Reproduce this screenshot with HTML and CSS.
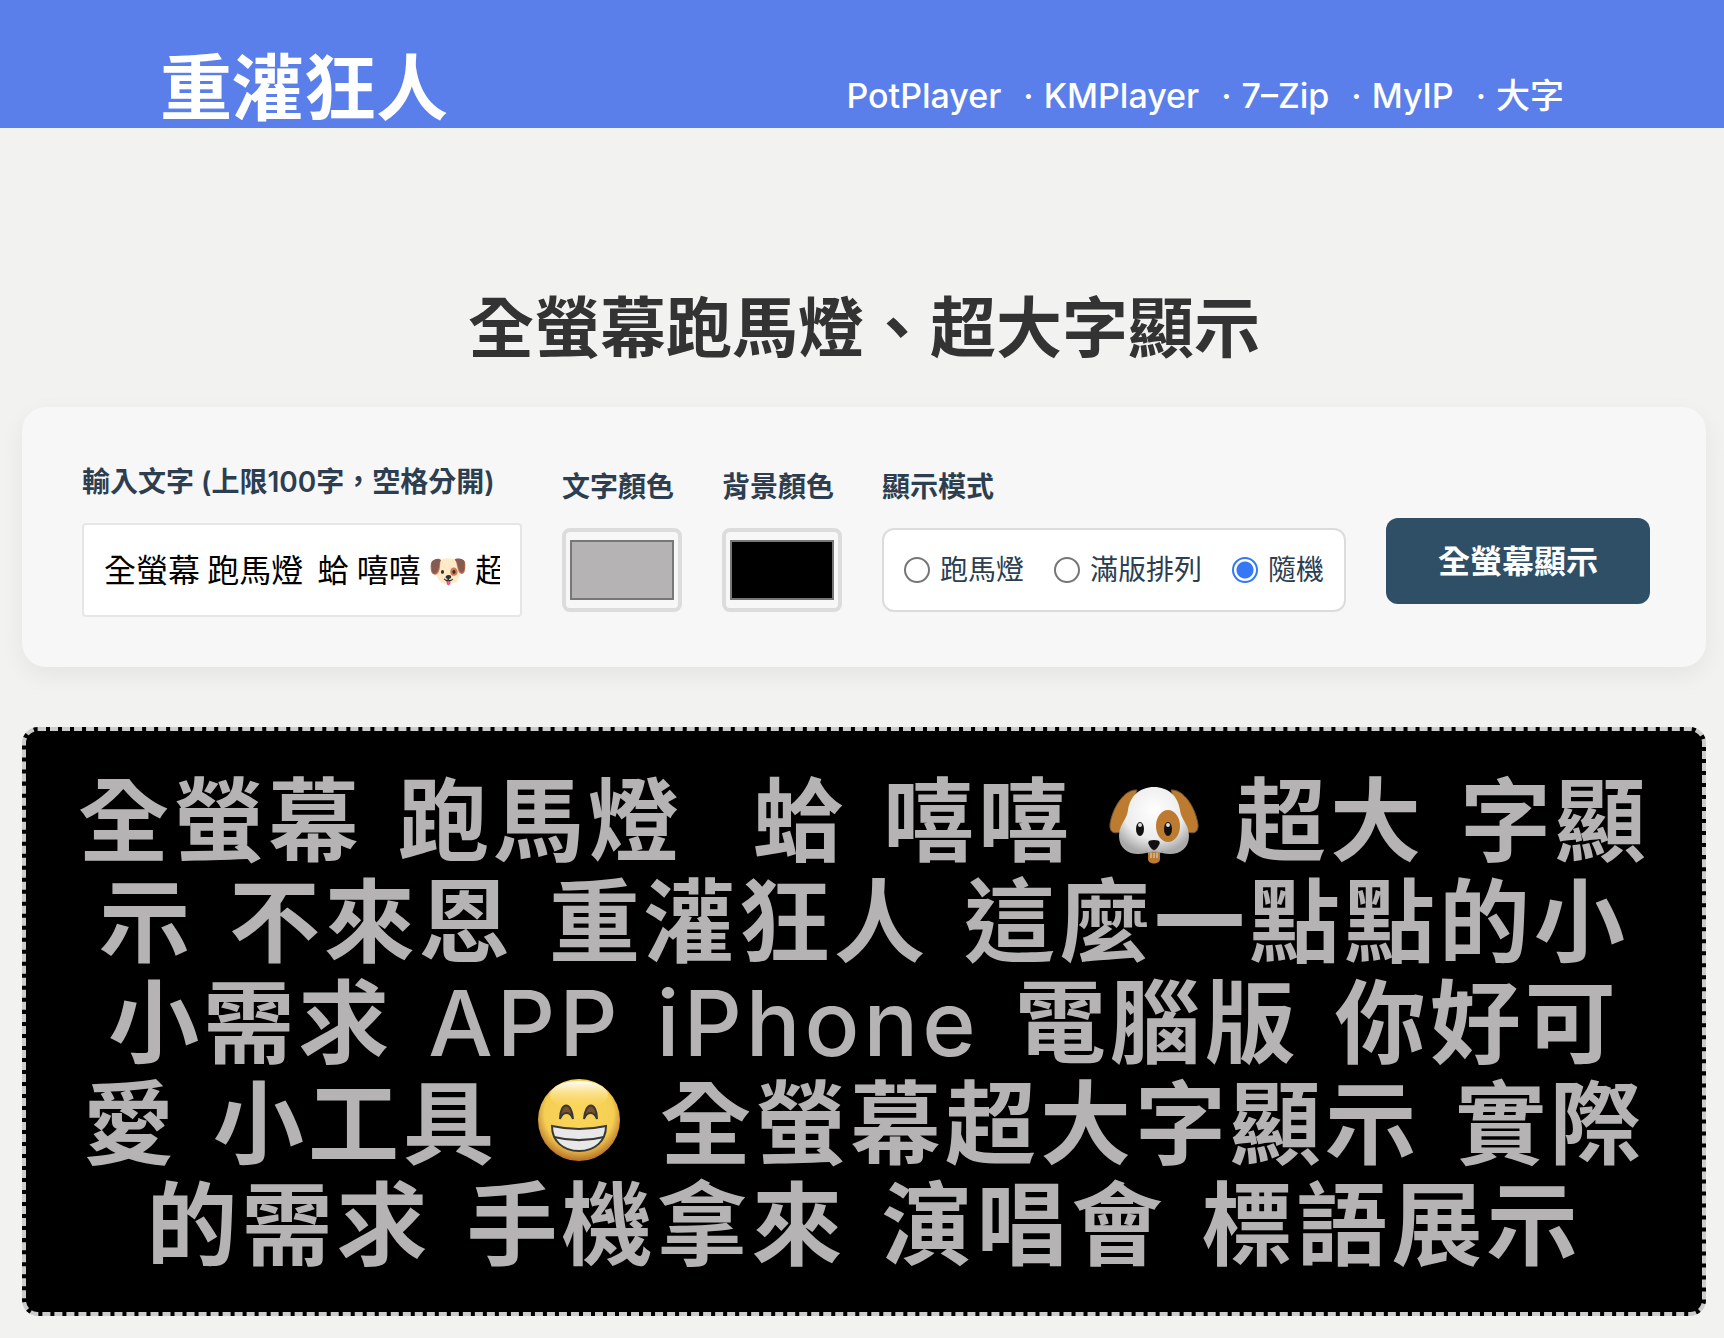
FILE: index.html
```html
<!DOCTYPE html>
<html lang="zh-Hant">
<head>
<meta charset="utf-8">
<meta name="viewport" content="width=device-width, initial-scale=1">
<title>全螢幕跑馬燈、超大字顯示</title>
<link rel="stylesheet" href="styles.css">
</head>
<body>
<svg class="defs" aria-hidden="true">
  <defs>
    <radialGradient id="fur" cx="50%" cy="35%" r="65%">
      <stop offset="0" stop-color="#ffffff"/>
      <stop offset="0.65" stop-color="#ececec"/>
      <stop offset="1" stop-color="#a9a9a9"/>
    </radialGradient>
    <radialGradient id="skin" cx="50%" cy="42%" r="56%">
      <stop offset="0" stop-color="#fbd65a"/>
      <stop offset="0.75" stop-color="#f5cf52"/>
      <stop offset="1" stop-color="#bd7a2c"/>
    </radialGradient>
    <linearGradient id="shine" x1="0" y1="0" x2="0" y2="1">
      <stop offset="0" stop-color="#ffffff"/>
      <stop offset="1" stop-color="#fbd65a" stop-opacity="0"/>
    </linearGradient>
    <symbol id="dog" viewBox="0 -5 92 92">
      <path d="M29 9C17 8 5 25 2 43c-1 9 5 10 10 8 6-3 9-10 10-18z" fill="#bd7b30" stroke="#6e5638"/>
      <path d="M63 9c12-1 24 16 27 34 1 9-5 10-10 8-6-3-9-10-10-18z" fill="#bd7b30" stroke="#6e5638"/>
      <path d="M46 6c14 0 24 9 26 23 1 10 9 14 9 26 0 12-9 18-19 18-6 0-10-2-16-2s-10 2-16 2c-10 0-19-6-19-18 0-12 8-16 9-26C22 15 32 6 46 6z" fill="url(#fur)"/>
      <ellipse cx="60" cy="45" rx="12" ry="16" fill="#bd7b30"/>
      <path d="M40 71h12v7c0 6-12 6-12 0z" fill="#bd7b30"/>
      <path d="M43 72v5M46 72v5M49 72v5" stroke="#dedede"/>
      <path d="M46 62v8m-9 0c3 3 7 2 9-1 2 3 6 4 9 1" fill="none" stroke="#999" stroke-width="1"/>
      <ellipse cx="32" cy="48" rx="4" ry="7" fill="#111"/>
      <ellipse cx="60" cy="48" rx="4" ry="7" fill="#111"/>
      <circle cx="32" cy="44" r="2" fill="#ddd"/>
      <circle cx="60" cy="44" r="2" fill="#ddd"/>
      <path d="M46 59c7 0 6 3 5 5s-3 5-5 5-4-3-5-5-2-5 5-5z" fill="#111"/>
    </symbol>
    <symbol id="grin" viewBox="0 5 92 92">
      <circle cx="46" cy="46" r="41" fill="url(#skin)"/>
      <ellipse cx="46" cy="21" rx="29" ry="14" fill="url(#shine)"/>
      <path d="M27 45c0-18 12-18 13 0-3-8-10-8-13 0zM51 45c1-18 13-18 13 0-3-8-10-8-13 0z" fill="#7c5029" stroke="#383838" stroke-width="2"/>
      <path d="M19 52c18 4 36 4 54 0 0 15-11 25-27 25S19 67 19 52z" fill="#e8e8e8" stroke="#383838" stroke-width="2"/>
      <path d="M21 63c16 4 34 4 50 0" fill="none" stroke="#383838" stroke-width="2"/>
    </symbol>
  </defs>
</svg>

<header class="site-header">
  <a class="brand" href="#">重灌狂人</a>
  <nav class="site-nav">
    <a href="#">PotPlayer</a>
    <span>·</span>
    <a href="#">KMPlayer</a>
    <span>·</span>
    <a href="#">7–Zip</a>
    <span>·</span>
    <a href="#">MyIP</a>
    <span>·</span>
    <a href="#">大字</a>
  </nav>
</header>

<main class="page">
  <h1 class="page-title">全螢幕跑馬燈、超大字顯示</h1>

  <form class="controls">
    <div class="field field-text">
      <label for="message">輸入文字 (上限100字，空格分開)</label>
      <input class="text-input" id="message" type="text" value="全螢幕 跑馬燈  蛤 嘻嘻 🐶 超大 字顯示 不來恩 重灌狂人">
    </div>
    <div class="field">
      <label for="text-color">文字顏色</label>
      <input class="color-input" id="text-color" type="color" value="#b5b3b4">
    </div>
    <div class="field">
      <label for="back-color">背景顏色</label>
      <input class="color-input" id="back-color" type="color" value="#000000">
    </div>
    <div class="field" role="radiogroup" aria-labelledby="mode-label">
      <span class="field-label" id="mode-label">顯示模式</span>
      <div class="modes">
        <label class="mode"><input type="radio" name="mode">跑馬燈</label>
        <label class="mode"><input type="radio" name="mode">滿版排列</label>
        <label class="mode"><input type="radio" name="mode" checked>隨機</label>
      </div>
    </div>
    <button class="show-button" type="button">全螢幕顯示</button>
  </form>

  <section class="preview">
    <p class="line"><span>全螢幕</span> <span>跑馬燈</span> <span class="spaced">蛤</span> <span>嘻嘻</span> <svg class="emoji" role="img" aria-label="🐶"><use href="#dog"/></svg> <span>超大</span> <span>字顯</span></p>
    <p class="line"><span>示</span> <span>不來恩</span> <span>重灌狂人</span> <span>這麼一點點的小</span></p>
    <p class="line"><span>小需求</span> <span class="latin">APP</span> <span class="latin">iPhone</span> <span>電腦版</span> <span>你好可</span></p>
    <p class="line"><span>愛</span> <span>小工具</span> <svg class="emoji" role="img" aria-label="😁"><use href="#grin"/></svg> <span>全螢幕超大字顯示</span> <span>實際</span></p>
    <p class="line"><span>的需求</span> <span>手機拿來</span> <span>演唱會</span> <span>標語展示</span></p>
  </section>
</main>
</body>
</html>
```
FILE: styles.css
```css
* {
  box-sizing: border-box;
}

body {
  margin: 0;
  background: #f2f2f0;
  color: #333;
  font-family: Inter, "Noto Sans CJK TC", sans-serif;
}

.defs {
  position: absolute;
  width: 0;
  height: 0;
}

.site-header {
  display: flex;
  justify-content: space-between;
  align-items: flex-end;
  height: 128px;
  padding: 0 160px;
  background: #5a7fea;
}

.brand {
  color: #fff;
  font-size: 72px;
  font-weight: 700;
  line-height: 80px;
  text-decoration: none;
}

.site-nav {
  display: flex;
  gap: 10px;
  color: #fff;
  font-size: 34px;
  font-weight: 500;
  line-height: 64px;
}

.site-nav a {
  color: #fff;
  text-decoration: none;
}

.site-nav span {
  padding-left: 12px;
}

.page {
  padding: 150px 18px 21px 22px;
}

.page-title {
  margin: 0;
  font-size: 66px;
  font-weight: 700;
  line-height: 100px;
  text-align: center;
}

.controls {
  display: flex;
  align-items: center;
  gap: 40px;
  margin-top: 29px;
  padding: 50px 56px 50px 60px;
  border-radius: 24px;
  background: #f7f7f7;
  box-shadow: 0 8px 24px rgba(0, 0, 0, 0.06);
  color: #2c3e50;
  font-size: 28px;
}

.field {
  display: flex;
  flex-direction: column;
  gap: 16px;
  font-weight: 600;
  line-height: 50px;
  white-space: nowrap;
}

.field-text {
  flex: 1;
}

.text-input {
  width: 100%;
  height: 94px;
  padding: 0 20px 4px;
  border: 2px solid #e6e6e6;
  border-radius: 4px;
  background: #fff;
  color: #000;
  font-family: "Noto Sans CJK TC", sans-serif;
  font-size: 32px;
}

.color-input {
  width: 120px;
  height: 84px;
  padding: 8px 4px;
  border: 4px solid #dcdcdc;
  border-radius: 8px;
  background: #f7f7f7;
}

.color-input::-webkit-color-swatch-wrapper {
  padding: 0;
}

.color-input::-webkit-color-swatch {
  border: 2px solid #777;
  border-radius: 0;
}

.modes {
  display: flex;
  align-items: center;
  gap: 30px;
  height: 84px;
  padding: 0 20px;
  border: 2px solid #dcdcdc;
  border-radius: 12px;
  background: #fff;
}

.mode {
  display: flex;
  align-items: center;
  gap: 10px;
  font-weight: 400;
}

.mode input {
  width: 26px;
  height: 26px;
  margin: 0;
  border: 2px solid #767676;
  border-radius: 50%;
  background: #fff;
  appearance: none;
}

.mode input:checked {
  border-color: #3478f6;
  background: radial-gradient(circle, #3478f6 8px, #fff 9px);
}

.show-button {
  width: 264px;
  height: 86px;
  margin-top: 48px;
  padding: 0 0 4px;
  border: 0;
  border-radius: 12px;
  background: #2f4f67;
  color: #fff;
  font-family: inherit;
  font-size: 32px;
  font-weight: 700;
}

.preview {
  margin-top: 60px;
  padding: 40px 0 36px;
  border: 4px dashed #ccc;
  border-radius: 16px;
  background: #000;
  color: #b5b3b4;
  font-size: 91px;
  font-weight: 700;
  letter-spacing: 4px;
  line-height: 101px;
}

.line {
  display: flex;
  justify-content: center;
  align-items: center;
  gap: 35px;
  height: 101px;
  margin: 0;
  white-space: pre;
}

.spaced {
  margin-left: 35px;
}

.latin {
  font-weight: 500;
}

.emoji {
  width: 92px;
  height: 92px;
}
```
